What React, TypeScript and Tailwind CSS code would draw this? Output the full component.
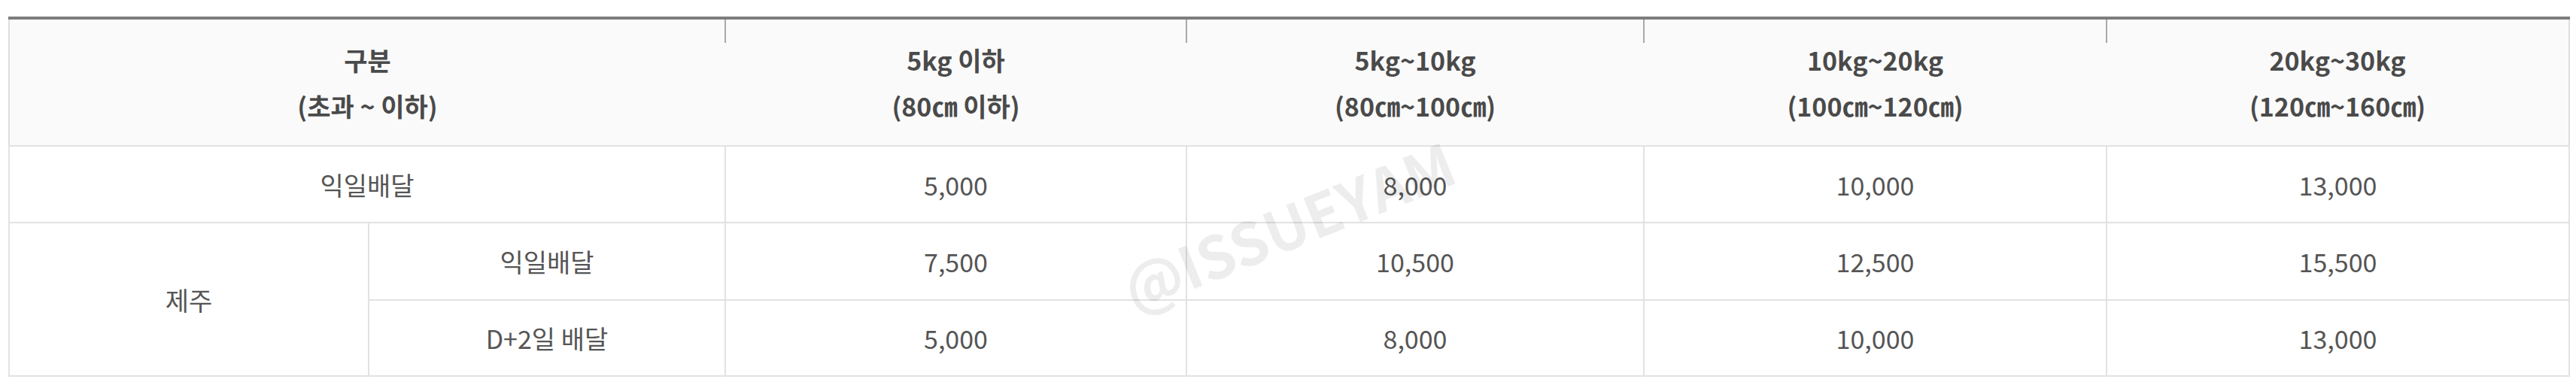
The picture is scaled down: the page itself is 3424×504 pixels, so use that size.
const font = '"Malgun Gothic", "Noto Sans CJK KR", "Noto Sans", sans-serif';

const heads = [
  ['5kg 이하', '(80㎝ 이하)'],
  ['5kg~10kg', '(80㎝~100㎝)'],
  ['10kg~20kg', '(100㎝~120㎝)'],
  ['20kg~30kg', '(120㎝~160㎝)'],
];

const td = 'border-2 border-[#e2e2e2] p-0 text-center align-middle';

function HeadCell({ top, bottom, first }: { top: string; bottom: string; first?: boolean }) {
  return (
    <th
      colSpan={first ? 2 : 1}
      className="relative h-[170px] border-b-2 border-[#e2e2e2] bg-[#fafafa] p-0 text-center align-middle text-[34px] font-semibold text-[#4a4a4a]"
    >
      {!first && <span className="absolute left-[-1px] top-0 h-[31px] w-[2px] bg-[#a9a9a9]" />}
      <div className="leading-[61px]">{top}</div>
      <div className="leading-[61px]">{bottom}</div>
    </th>
  );
}

export default function App() {
  const rows = [
    ['5,000', '8,000', '10,000', '13,000'],
    ['7,500', '10,500', '12,500', '15,500'],
    ['5,000', '8,000', '10,000', '13,000'],
  ];

  return (
    <div className="relative min-h-[504px] bg-white pl-[11px] pr-[8px] pt-[22px]" style={{ fontFamily: font }}>
      <table className="w-full table-fixed border-collapse border-x-2 border-b-2 border-t-4 border-x-[#dedede] border-b-[#dedede] border-t-[#7d7d7d] text-[34px] text-[#555]">
        <colgroup>
          <col className="w-[478px]" />
          <col className="w-[474px]" />
          <col className="w-[613px]" />
          <col className="w-[608px]" />
          <col className="w-[615px]" />
          <col />
        </colgroup>
        <thead>
          <tr>
            <HeadCell top="구분" bottom="(초과 ~ 이하)" first />
            {heads.map(([a, b]) => (
              <HeadCell key={a} top={a} bottom={b} />
            ))}
          </tr>
        </thead>
        <tbody>
          <tr className="h-[102px]">
            <td colSpan={2} className={td}>익일배달</td>
            {rows[0].map((v, i) => (
              <td key={i} className={td}>{v}</td>
            ))}
          </tr>
          <tr className="h-[103px]">
            <td rowSpan={2} className={td}>제주</td>
            <td className={td}>익일배달</td>
            {rows[1].map((v, i) => (
              <td key={i} className={td}>{v}</td>
            ))}
          </tr>
          <tr className="h-[101px]">
            <td className={td}>D+2일 배달</td>
            {rows[2].map((v, i) => (
              <td key={i} className={td}>{v}</td>
            ))}
          </tr>
        </tbody>
      </table>

      <span className="pointer-events-none absolute left-[1712px] top-[298px] -translate-x-1/2 -translate-y-1/2 -rotate-[22deg] whitespace-nowrap text-[78px] font-bold text-black/[0.07]">
        @ISSUEYAM
      </span>
    </div>
  );
}
